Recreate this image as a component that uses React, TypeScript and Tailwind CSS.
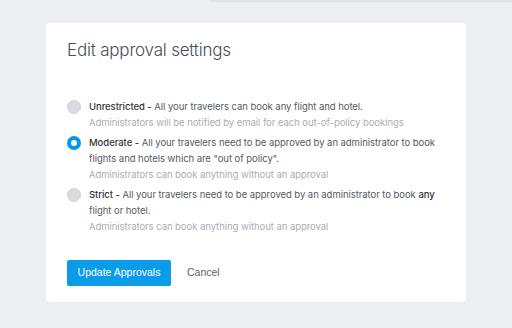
import React, { useState } from 'react';

type Level = 'unrestricted' | 'moderate' | 'strict';

interface Option {
  id: Level;
  label: string;
  description: React.ReactNode;
  note: string;
}

const options: Option[] = [
  {
    id: 'unrestricted',
    label: 'Unrestricted',
    description: 'All your travelers can book any flight and hotel.',
    note: 'Administrators will be notified by email for each out-of-policy bookings',
  },
  {
    id: 'moderate',
    label: 'Moderate',
    description: 'All your travelers need to be approved by an administrator to book flights and hotels which are "out of policy".',
    note: 'Administrators can book anything without an approval',
  },
  {
    id: 'strict',
    label: 'Strict',
    description: (
      <>
        All your travelers need to be approved by an administrator to book{' '}
        <span className="text-[#2f333a] font-medium">any</span> flight or hotel.
      </>
    ),
    note: 'Administrators can book anything without an approval',
  },
];

const Radio: React.FC<{ checked: boolean }> = ({ checked }) =>
  checked ? (
    <span className="mt-[1px] w-[14px] h-[14px] rounded-full border-[4px] border-[#0b97e6] bg-white shrink-0" />
  ) : (
    <span className="mt-[1px] w-[14px] h-[14px] rounded-full bg-[#d8dbe0] border border-[#cfd2d8] shrink-0" />
  );

export default function App() {
  const [level, setLevel] = useState<Level>('moderate');

  return (
    <div
      className="w-[512px] h-[328px] bg-[#edeef2] overflow-hidden"
      style={{ fontFamily: 'Inter, "Liberation Sans", sans-serif' }}
    >
      <div className="h-[2px] ml-[209px] bg-[#e2e3e7]" />

      <div className="mt-[21px] ml-[46px] w-[420px] bg-white rounded-[4px] pt-[15px] pb-4 px-[21px]">
        <h2 className="text-[17px] leading-6 font-light text-[#4a4e57] tracking-[-0.2px]">
          Edit approval settings
        </h2>

        {/* Options */}
        <div className="mt-[37px] flex flex-col gap-[4px]">
          {options.map((opt) => (
            <label
              key={opt.id}
              onClick={() => setLevel(opt.id)}
              className="flex items-start gap-2 cursor-pointer"
            >
              <Radio checked={level === opt.id} />
              <div className="text-[9.5px] leading-4 w-[352px] tracking-[-0.05px]">
                <p className="text-[#555a63]">
                  <span className="text-[#30343b] font-medium">{opt.label} -</span>{' '}
                  {opt.description}
                </p>
                <p className="text-[#a9adb4]">{opt.note}</p>
              </div>
            </label>
          ))}
        </div>

        {/* Footer */}
        <div
          className="mt-[25px] flex items-center gap-4"
          style={{ fontFamily: '"Liberation Sans", Arial, sans-serif' }}
        >
          <button className="w-[104px] h-[26px] bg-[#0a9be9] text-white text-[10.5px] rounded-[2px]">
            Update Approvals
          </button>
          <button className="text-[10.5px] text-[#5b5f66]">Cancel</button>
        </div>
      </div>
    </div>
  );
}
